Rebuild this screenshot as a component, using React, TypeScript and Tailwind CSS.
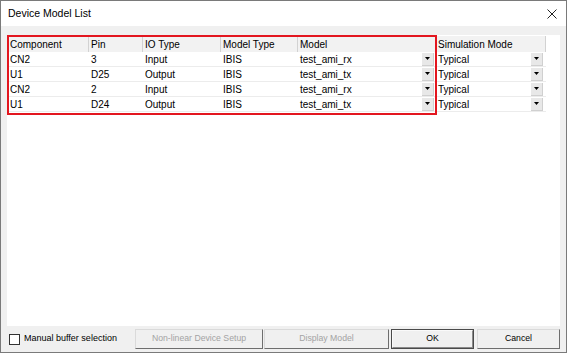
import React from 'react';

const rows = [
  { comp: 'CN2', pin: '3', io: 'Input', type: 'IBIS', model: 'test_ami_rx', sim: 'Typical' },
  { comp: 'U1', pin: 'D25', io: 'Output', type: 'IBIS', model: 'test_ami_tx', sim: 'Typical' },
  { comp: 'CN2', pin: '2', io: 'Input', type: 'IBIS', model: 'test_ami_rx', sim: 'Typical' },
  { comp: 'U1', pin: 'D24', io: 'Output', type: 'IBIS', model: 'test_ami_tx', sim: 'Typical' },
];

const headers = ['Component', 'Pin', 'IO Type', 'Model Type', 'Model', 'Simulation Mode'];

function DropButton() {
  return (
    <div className="w-[12px] h-[13px] bg-[#e8e8e8] border-r border-b border-[#d0d0d0] flex items-center justify-center">
      <svg width="5" height="3" viewBox="0 0 5 3">
        <path d="M0 0h5L2.5 3z" fill="#000" />
      </svg>
    </div>
  );
}

function Cell({ children, className = '' }: { children: React.ReactNode; className?: string }) {
  return <div className={`h-[15px] flex items-center pl-[2px] border-b border-[#ececec] ${className}`}>{children}</div>;
}

function WinButton({ label, disabled }: { label: string; disabled?: boolean }) {
  return (
    <div
      className={`h-[20px] flex items-center justify-center bg-[#f0f0f0] border border-t-[#dadada] border-l-[#dadada] border-r-[#6e6e6e] border-b-[#6e6e6e] text-[8.7px] ${
        disabled ? 'text-[#a3a3a3]' : 'text-black'
      }`}
    >
      {label}
    </div>
  );
}

export default function App() {
  return (
    <div className="w-[567px] h-[353px] border border-[#7a7a7a] bg-[#f0f0f0] flex flex-col font-['Liberation_Sans',Arial,sans-serif] text-black">
      <div className="h-[25px] bg-white flex items-center justify-between pl-[7px] pr-[9px]">
        <span className="text-[10.5px] mt-[1px]">Device Model List</span>
        <svg width="10" height="10" viewBox="0 0 10 10">
          <path d="M0.5 0.5l9 9M9.5 0.5l-9 9" stroke="#222" strokeWidth="1" />
        </svg>
      </div>

      <div className="flex-1 flex flex-col px-[6px] pt-[9px]">
        <div className="relative h-[291px] bg-white pt-[1px] pl-[1px]">
          <div className="grid grid-cols-[81px_54px_78px_77px_138px_110px] text-[10px]">
            {headers.map((h) => (
              <div
                key={h}
                className="h-[16px] flex items-center pl-[2px] bg-[#f2f2f2] border-r border-[#d2d2d2]"
              >
                {h}
              </div>
            ))}
            {rows.map((r, i) => (
              <React.Fragment key={i}>
                <Cell>{r.comp}</Cell>
                <Cell>{r.pin}</Cell>
                <Cell>{r.io}</Cell>
                <Cell>{r.type}</Cell>
                <Cell className="justify-between pr-[2px]">
                  <span>{r.model}</span>
                  <DropButton />
                </Cell>
                <Cell className="justify-between pr-[3px]">
                  <span>{r.sim}</span>
                  <DropButton />
                </Cell>
              </React.Fragment>
            ))}
          </div>
          <div className="absolute left-0 top-0 w-[430px] h-[80px] border-2 border-[#e3161f]" />
        </div>

        <div className="flex items-center mt-[3px] h-[20px]">
          <div className="ml-[2px] w-[11px] h-[11px] border border-[#333] bg-white" />
          <span className="ml-[4px] text-[9px]">Manual buffer selection</span>
          <div className="ml-auto flex">
            <div className="w-[128px]">
              <WinButton label="Non-linear Device Setup" disabled />
            </div>
            <div className="w-[125px] ml-[1px]">
              <WinButton label="Display Model" disabled />
            </div>
            <div className="w-[83px] ml-[2px] h-[20px] border border-[#4a4a4a]">
              <div className="h-full flex items-center justify-center bg-[#f0f0f0] border border-t-[#fafafa] border-l-[#fafafa] border-r-[#8a8a8a] border-b-[#8a8a8a] text-[8.7px]">
                OK
              </div>
            </div>
            <div className="w-[83px] ml-[3px]">
              <WinButton label="Cancel" />
            </div>
          </div>
        </div>
      </div>
    </div>
  );
}
